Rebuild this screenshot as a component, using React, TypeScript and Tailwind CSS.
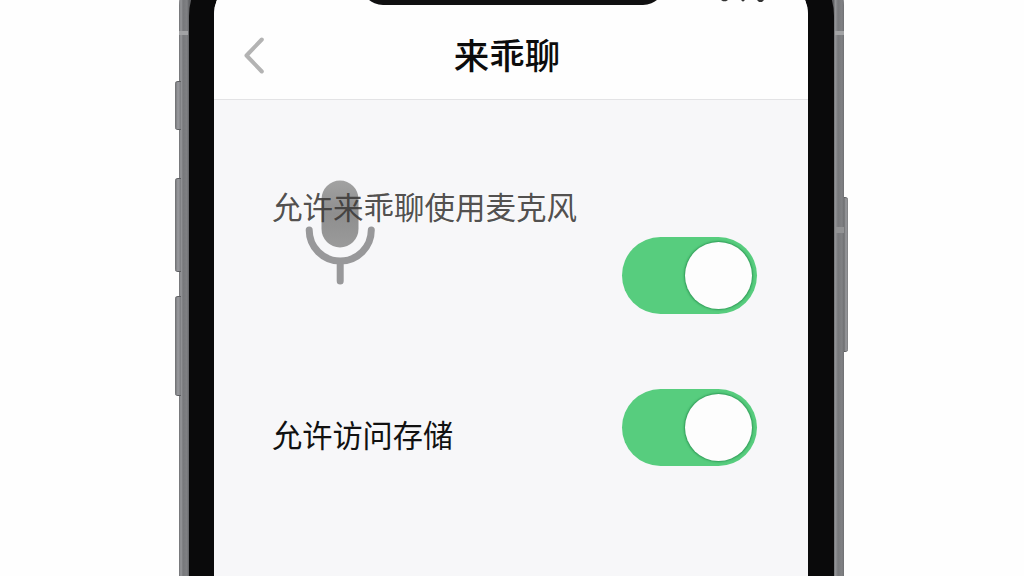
import { useState } from 'react';

interface ToggleProps {
  label: string;
  checked: boolean;
  onChange: () => void;
}

function Toggle({ label, checked, onChange }: ToggleProps) {
  return (
    <button
      type="button"
      role="switch"
      aria-label={label}
      aria-checked={checked}
      onClick={onChange}
      className={`flex h-[77px] w-[135px] shrink-0 items-center rounded-full pr-[5px] pl-[4px] ${
        checked ? 'justify-end bg-[#57cd7e]' : 'justify-start bg-gray-300'
      }`}
    >
      <span className="size-[67px] rounded-full bg-[#fdfdfd] shadow-[0_0_2px_1px_rgba(20,120,60,0.6)]" />
    </button>
  );
}

function MicIcon() {
  return (
    <svg viewBox="0 0 72 106" className="h-[106px] w-[72px]" fill="none">
      <defs>
        <linearGradient id="mic" x1="0" y1="0" x2="0" y2="1">
          <stop offset="0" stopColor="#a2a2a2" />
          <stop offset="0.5" stopColor="#8e8e8e" />
          <stop offset="1" stopColor="#9b9b9b" />
        </linearGradient>
      </defs>
      <rect x="16.500" y="0.500" width="37" height="67" rx="18.5" fill="url(#mic)" />
      <path
        d="M4.200 50 A31.050 31.050 0 0 0 66.300 50 M35.200 81 V101"
        stroke="#98989a"
        strokeWidth="7"
        strokeLinecap="round"
      />
    </svg>
  );
}

function SideButton({ className }: { className: string }) {
  return (
    <div
      className={`border-y border-[#5c5d60] bg-linear-to-r from-[#6d6e70] via-[#9b9ca0] to-[#7b7c7f] ${className}`}
    />
  );
}

export default function App() {
  const [microphone, setMicrophone] = useState(true);
  const [storage, setStorage] = useState(true);

  return (
    <div className="flex h-[576px] w-[1024px] overflow-hidden bg-[#fefefe] pl-[175px] font-['Noto_Sans_CJK_SC',sans-serif]">
      <div className="z-10 w-[6px] shrink-0 pt-[81px]">
        <SideButton className="h-[49px] rounded-l-[3px]" />
        <SideButton className="mt-[48px] h-[94px] rounded-l-[3px]" />
        <SideButton className="mt-[24px] h-[100px] rounded-l-[3px]" />
      </div>

      <div className="relative -mt-[56px] -ml-[2px] h-[700px] w-[665px] shrink-0 rounded-t-[62px] bg-[linear-gradient(to_right,#6f7073_0,#97989b_2px,#77787b_4px,#808184_8px,#606164_10px,#606164_655px,#97989b_656px,#77787b_659px,#808184_663px,#6f7073_665px)] px-[10px] pt-[10px]">
        {/* antenna bands */}
        <div className="absolute top-[87px] left-0 h-[4px] w-[9px] bg-[#a2a3a5]" />
        <div className="absolute top-[87px] right-0 h-[4px] w-[9px] bg-[#a2a3a5]" />
        <div className="absolute top-[283px] right-0 h-[6px] w-[9px] bg-[#929395]" />
        <div className="h-full rounded-t-[62px] bg-[#0a0a0b] pr-[26px] pl-[25px] pt-[26px]">
          <div className="h-full overflow-hidden rounded-t-[34px] bg-[#f7f7f9]">
            <header className="h-[120px] border-b border-[#e3e3e5] bg-[#fefefe]">
              <div className="relative h-[25px]">
                <div className="mx-auto h-full w-[304px] translate-x-[2px] rounded-b-[22px] bg-[#101011]" />
                <svg viewBox="0 0 44 4" className="absolute top-[20px] left-[507px] h-[4px] w-[44px]" fill="#333">
                  <path d="M0 0 H7 L5 1.300 H2 Z M20 0 H24 L22 1.800 Z M36 0 H43 L41 2 H38 Z" />
                </svg>
              </div>
              <div className="flex h-[94px] items-center pt-[5px]">
                <button type="button" aria-label="返回" className="ml-[29px] w-[24px]">
                  <svg viewBox="0 0 24 40" className="h-[40px] w-[24px]" fill="none">
                    <path
                      d="M18.800 4.500 L3.500 20.500 L18.800 36.500"
                      stroke="#b3b3b3"
                      strokeWidth="4"
                      strokeLinecap="round"
                      strokeLinejoin="round"
                    />
                  </svg>
                </button>
                <h1 className="flex-1 pr-[61px] pb-[2px] text-center text-[35.500px] font-medium leading-[50px] text-[#0c0c0c]">
                  来乖聊
                </h1>
              </div>
            </header>

            <main className="pr-[51px] pl-[58px]">
              <section className="flex h-[229px] justify-between">
                <div className="relative pt-[84px]">
                  <div className="absolute top-[80px] left-[33px]">
                    <MicIcon />
                  </div>
                  <p className="relative whitespace-nowrap text-[30.500px] leading-[44px] text-[#3c3a38]/90">
                    允许来乖聊使用麦克风
                  </p>
                </div>
                <div className="-ml-2 pt-[137px]">
                  <Toggle label="麦克风" checked={microphone} onChange={() => setMicrophone(!microphone)} />
                </div>
              </section>
              <section className="flex justify-between pt-[60px]">
                <p className="pt-[23px] text-[30.200px] leading-[44px] text-[#111]">允许访问存储</p>
                <Toggle label="存储" checked={storage} onChange={() => setStorage(!storage)} />
              </section>
            </main>
          </div>
        </div>
      </div>

      <div className="w-[4px] shrink-0 pt-[197px]">
        <SideButton className="h-[155px] rounded-r-[3px]" />
      </div>
    </div>
  );
}
